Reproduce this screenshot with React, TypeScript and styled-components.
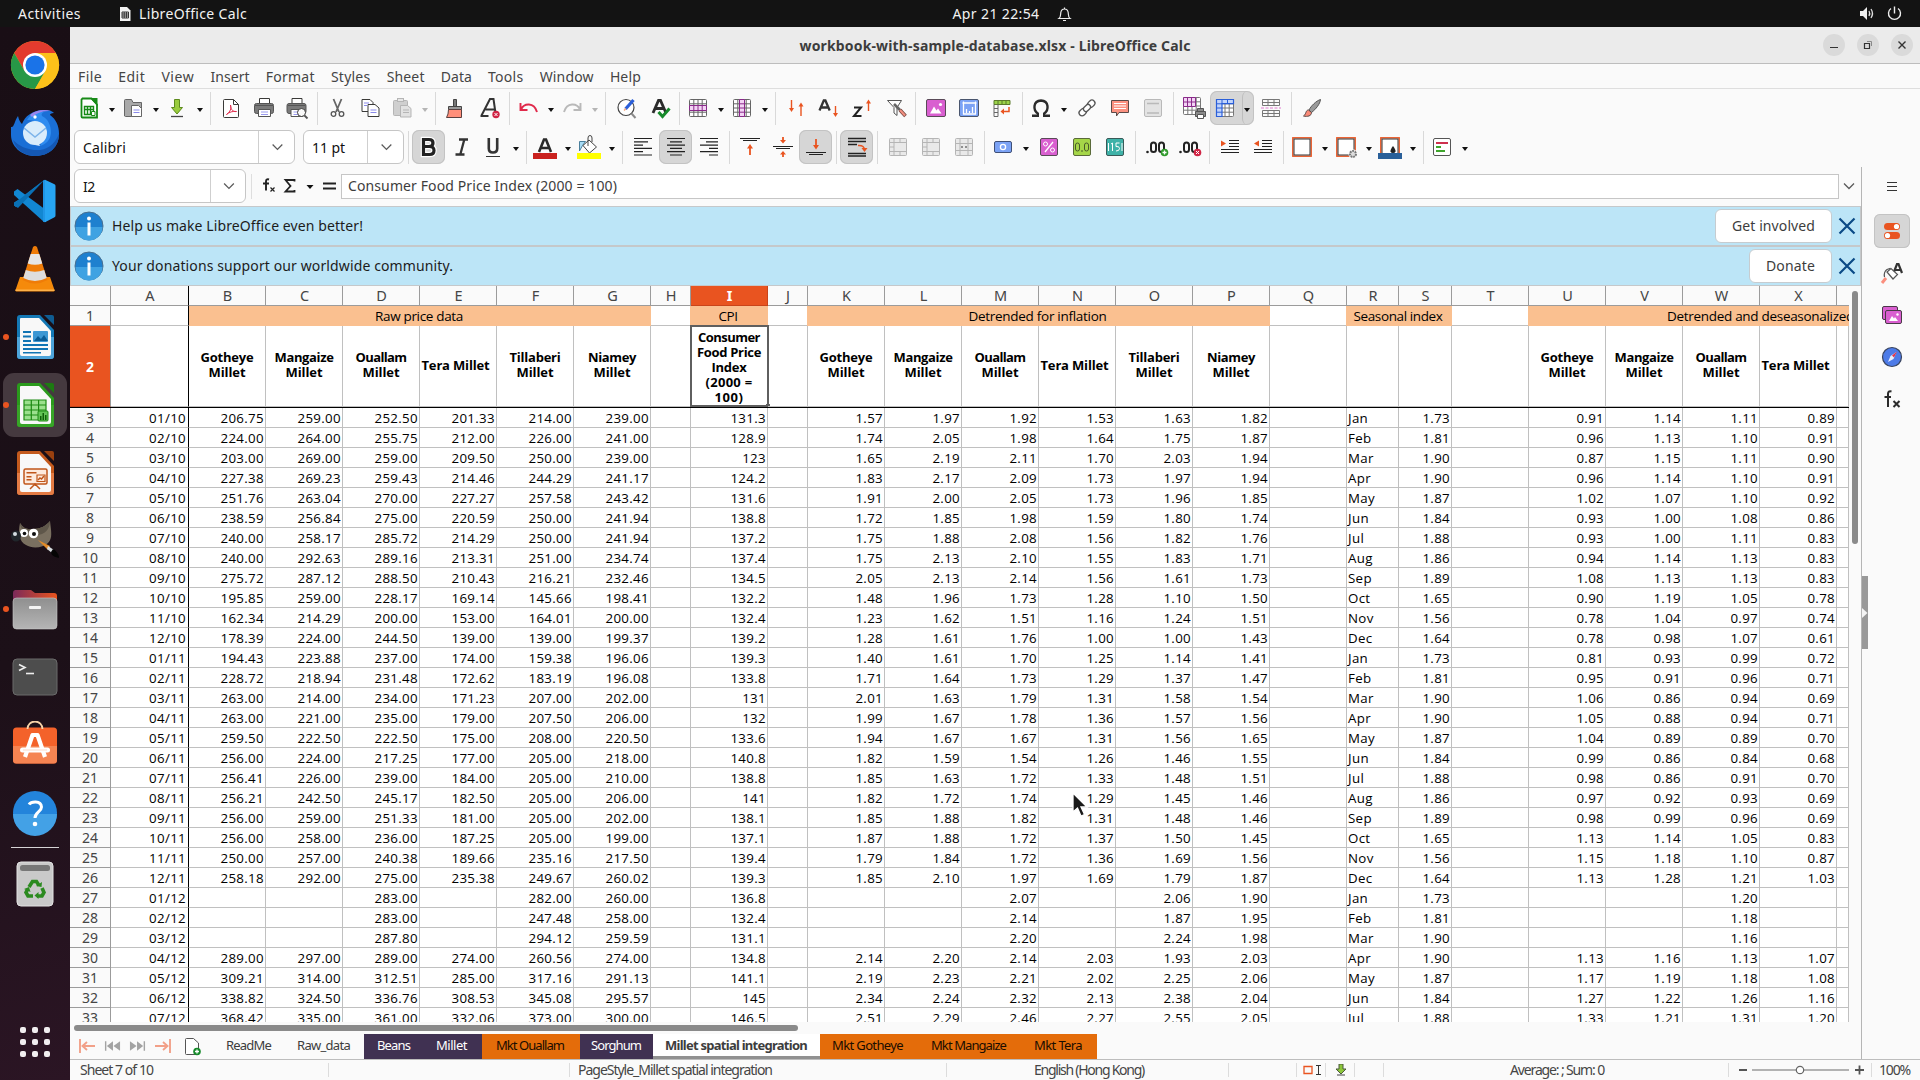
import React, { ReactNode, useLayoutEffect, useRef, useState } from 'react';
import styled, { createGlobalStyle, css } from 'styled-components';

const UI_FONT = '"Noto Sans", "Open Sans", sans-serif';
const CELL_FONT = '"Open Sans", "Noto Sans", sans-serif';

const GlobalStyle = createGlobalStyle`
  * { box-sizing: border-box; }
  body { margin: 0; background: #fafafa; overflow: hidden; }
  svg { display: block; flex: none; }
`;

/* ---------- text that keeps a fixed advance width ---------- */

const LabelBox = styled.span<{ $w: number; $color?: string; $bold?: boolean; $size?: number }>`
  display: block;
  flex: none;
  width: ${p => p.$w}px;
  white-space: nowrap;
  ${p => p.$color && css`color: ${p.$color};`}
  ${p => p.$bold && css`font-weight: 700;`}
  ${p => p.$size && css`font-size: ${p.$size}px;`}
`;

function Label(props: { w: number; children: string; color?: string; bold?: boolean; size?: number }) {
  const ref = useRef<HTMLSpanElement>(null);
  const [spacing, setSpacing] = useState(0);
  useLayoutEffect(() => {
    if (ref.current) {
      const natural = ref.current.getBoundingClientRect().width;
      setSpacing((props.w - natural) / props.children.length);
    }
  }, []);
  return (
    <LabelBox $w={props.w} $color={props.color} $bold={props.bold} $size={props.size}>
      <span ref={ref} style={{ letterSpacing: spacing }}>{props.children}</span>
    </LabelBox>
  );
}

/* ---------- shell ---------- */

const Screen = styled.div`
  width: 1920px;
  height: 1080px;
  display: flex;
  flex-direction: column;
  font-family: ${UI_FONT};
  font-size: 14px;
  color: #3d3d3d;
  overflow: hidden;
`;

const TopBar = styled.header`
  height: 27px;
  flex: none;
  background: #131313;
  color: #f2f2f2;
  display: grid;
  grid-template-columns: 1fr auto 1fr;
  align-items: center;
  line-height: 26px;
`;
const TopLeft = styled.div`
  display: flex;
  align-items: center;
  padding-left: 18px;
`;
const AppName = styled.div`
  display: flex;
  align-items: center;
  gap: 8px;
  margin-left: 38px;
`;
const Clock = styled.div`
  display: flex;
  align-items: center;
  gap: 17px;
  padding-left: 104px;
`;
const TopRight = styled.div`
  display: flex;
  justify-content: flex-end;
  align-items: center;
  gap: 12px;
  padding-right: 18px;
`;
const Body = styled.div`
  flex: 1;
  display: flex;
  min-height: 0;
`;

/* ---------- dock ---------- */

const Dock = styled.nav`
  width: 70px;
  flex: none;
  padding-top: 4px;
  display: flex;
  flex-direction: column;
  align-items: center;
  background: linear-gradient(165deg, #190e15 0%, #1c1018 60%, #2b1524 100%);
`;
const DockSlot = styled.div<{ $active?: boolean }>`
  width: 70px;
  height: 68px;
  display: flex;
  align-items: center;
  position: relative;
  justify-content: center;
  &::before {
    content: '';
    position: absolute;
    inset: 2px 3px;
    border-radius: 11px;
    background: ${p => (p.$active ? '#45393f' : 'transparent')};
  }
  svg { position: relative; }
`;
const RunDot = styled.i`
  position: absolute;
  left: 3px;
  top: 31px;
  width: 6px;
  height: 6px;
  border-radius: 3px;
  background: #e95420;
`;
const DockRule = styled.div`
  width: 48px;
  height: 1px;
  background: #d6d3d5;
  margin-bottom: 2px;
`;
const DockSpacer = styled.div`flex: 1;`;
const AppGrid = styled.div`
  display: grid;
  grid-template-columns: repeat(3, 6px);
  gap: 6px;
  margin-bottom: 23px;
  i { width: 6px; height: 6px; border-radius: 2px; background: #f0eeef; }
`;

const DocShape = ({ c, d, l, children }: { c: string; d: string; l: string; children: ReactNode }) => (
  <svg width="48" height="48" viewBox="0 0 48 48">
    <path d="M9 2h20l14 15v26a3 3 0 0 1-3 3H9a3 3 0 0 1-3-3V5a3 3 0 0 1 3-3z" fill={c} />
    <path d="M6 24h37v19a3 3 0 0 1-3 3H9a3 3 0 0 1-3-3z" fill={l} />
    <path d="M10 5h18l12 13v23a2 2 0 0 1-2 2H11a2 2 0 0 1-2-2V6a1 1 0 0 1 1-1z" fill="#f8f8f8" />
    <path d="M33 2h8a2 2 0 0 1 2 2v8z" fill={d} />
    {children}
  </svg>
);

const dockIcons: Record<string, ReactNode> = {
  chrome: (
    <svg width="50" height="50" viewBox="-25 -25 50 50">
      <circle r="24" fill="#fbbc15" />
      <path d="M-20.8-12A24 24 0 0 1 20.8-12L0-12-10.4 6z" fill="#e33b2e" />
      <path d="M-20.8-12A24 24 0 0 0 0 24L10.4 6-10.4 6z" fill="#279847" />
      <path d="M20.8-12H0L10.4 6 0 24A24 24 0 0 0 20.8-12z" fill="#fcc11a" />
      <circle r="12" fill="#fff" />
      <circle r="9.6" fill="#1a73e8" />
    </svg>
  ),
  thunderbird: (
    <svg width="50" height="48" viewBox="0 0 50 48">
      <path d="M1 18c3 1 3-5 7-11 1 4 2 6 4 8C15 7 22 2 32 1c5 0 9 0 12 3-3 0-4 1-4 2 6 4 9 11 9 19 0 13-10 22-24 22S1 37 1 26z" fill="#1a6fd6" />
      <path d="M3 31c3 10 12 16 22 16 14 0 24-9 24-22-5 12-14 17-25 16-8-1-15-4-21-10z" fill="#1458b4" />
      <path d="M17 11c4-7 11-9 17-8-2 1-3 2-2 4 6 3 9 9 9 17-1 8-5 11-11 13l5-10c3-8-5-16-18-16z" fill="#2f8cf0" />
      <path d="M20 6c5-5 14-6 21-4-8 0-13 1-19 6z" fill="#9b86ee" />
      <circle cx="25" cy="24" r="12" fill="#d9ecfb" />
      <path d="M14 19l11 9 11-9" fill="none" stroke="#7db4ea" strokeWidth="1.6" />
      <circle cx="25" cy="8" r="1.7" fill="#fff" />
      <path d="M25 36l5 1-2-4z" fill="#d9ecfb" />
    </svg>
  ),
  vscode: (
    <svg width="44" height="44" viewBox="0 0 44 44">
      <path d="M31 1L10 22.500 3 28 1 26.500v-3L5 21 31 1z" fill="#0d7dc4" />
      <path d="M1 15.500v-3L4.500 10 33 31v12L31 43 1 16z" fill="#1287d2" />
      <path d="M31 1.500L5 29l-4-2.500v-2L31 1.500z" fill="#0a70b5" />
      <path d="M32 .8l9.500 4.500a2 2 0 0 1 1 2v29a2 2 0 0 1-1 2L32 43.200l-2-1 2-3z" fill="#27a5f3" />
      <path d="M30 1.500l2-.7v42.400l-2-1z" fill="#1f95e5" />
    </svg>
  ),
  vlc: (
    <svg width="44" height="48" viewBox="0 0 44 48">
      <path d="M7 32h30l4.500 13a1 1 0 0 1-1 1.500H3.500a1 1 0 0 1-1-1.500z" fill="#f58a0b" />
      <path d="M2.500 44.500h39v1.500H2.500z" fill="#fdb14a" />
      <path d="M20 2q2-2 4 0l10.500 33q-12.500 7-25 0z" fill="#ef7c08" />
      <path d="M17.700 9h8.600l3 9.500q-7.300 2.500-14.600 0z" fill="#e6e6e6" />
      <path d="M12.800 25q9.200 3.500 18.400 0l2.500 8q-11.700 6-23.400 0z" fill="#dedede" />
    </svg>
  ),
  writer: (
    <DocShape c="#1478b5" d="#0f5c92" l="#4da4da">
      <g fill="#1174b4">
        <path d="M12 18h8v2h-8zM12 22.500h8v2h-8zM12 27h8v2h-8zM12 31h25v2H12zM12 35h25v2H12zM12 39h18v1.500H12z" />
        <rect x="22" y="18" width="15" height="11" rx="1" fill="#3d97d3" />
        <path d="M23 28l4-5 3 3 3-4 4 6z" fill="#0b5c96" />
      </g>
    </DocShape>
  ),
  calc: (
    <DocShape c="#2a9a1c" d="#1d7a12" l="#37a527">
      <path d="M13 19h22v20H13z" fill="#9be08d" />
      <path d="M13 19h22v20H13zM13 24h22M13 29h22M13 34h22M20.300 19v20M27.600 19v20" fill="none" stroke="#1d8a12" strokeWidth="1.200" />
      <rect x="27" y="30" width="10" height="10" rx="1" fill="#62c455" stroke="#1d8a12" />
      <path d="M29 39v-4h1.500v4zM31.500 39v-7H33v7zM34 39v-5h1.500v5z" fill="#0f5f08" />
    </DocShape>
  ),
  impress: (
    <DocShape c="#c45a1d" d="#99400f" l="#e37b44">
      <rect x="13" y="20" width="23" height="15" rx="1.500" fill="#fdeadd" stroke="#c0561a" strokeWidth="1.500" />
      <path d="M15.500 23h10v1.500h-10zM15.500 27h5v1.500h-5zM15.500 30h5v1.500h-5z" fill="#c0561a" />
      <path d="M26 26h8v6.500h-8z" fill="none" stroke="#c0561a" strokeWidth="1.200" />
      <path d="M27 31l2-2 1.500 1 2.500-3M19 40l5-5 5 5M24.500 35v2" fill="none" stroke="#c0561a" strokeWidth="1.500" />
    </DocShape>
  ),
  gimp: (
    <svg width="50" height="42" viewBox="0 0 50 42">
      <path d="M10 3c3 5 7 7 13 6 7 0 13-3 17-8 1 10 3 17-2 22-5 5-16 6-22 2C9 22 8 12 10 3z" fill="#7a7060" />
      <path d="M10 3c3 5 7 7 13 6 7 0 13-3 17-8 0 8-5 14-14 14S10 10 10 3z" fill="#5f574a" />
      <circle cx="14" cy="13" r="4" fill="#fff" />
      <circle cx="23.500" cy="13.500" r="4.800" fill="#fff" />
      <circle cx="14.500" cy="13.500" r="1.800" fill="#111" />
      <circle cx="24" cy="14" r="2" fill="#111" />
      <ellipse cx="6" cy="16" rx="5" ry="5.500" fill="#20262b" />
      <circle cx="5" cy="14" r="2" fill="#d5dde2" />
      <path d="M28 20l12 6-2 4z" fill="#e38b28" />
      <path d="M38 26l6 4-2 3-5-4z" fill="#d8dde0" />
      <path d="M43 29c4 2 6 6 6 9-5-1-8-3-8-6z" fill="#050505" />
    </svg>
  ),
  files: (
    <svg width="48" height="42" viewBox="0 -1 48 42">
      <defs>
        <linearGradient id="fold" x1="0" x2="1"><stop offset="0" stopColor="#7b2a5a" /><stop offset="1" stopColor="#e9541e" /></linearGradient>
        <linearGradient id="front" x1="0" x2="0" y1="0" y2="1"><stop offset="0" stopColor="#8f8f8f" /><stop offset="1" stopColor="#b5b5b5" /></linearGradient>
      </defs>
      <path d="M4 1h16l4 3h19a3 3 0 0 1 3 3v14H2V4a3 3 0 0 1 2-3z" fill="url(#fold)" />
      <rect x="2" y="9" width="44" height="31" rx="3.500" fill="url(#front)" stroke="#c9c9c9" strokeWidth=".6" />
      <rect x="18" y="17" width="12" height="3" rx="1" fill="#f4f4f4" />
    </svg>
  ),
  terminal: (
    <svg width="46" height="38" viewBox="0 0 46 38">
      <rect x="1" y="1" width="44" height="36" rx="4" fill="#4d4d4d" stroke="#6b6b6b" />
      <path d="M7 6.500l6 3-6 3" fill="none" stroke="#eee" strokeWidth="1.600" />
      <path d="M14 15.500h8" stroke="#eee" strokeWidth="1.600" />
    </svg>
  ),
  software: (
    <svg width="46" height="48" viewBox="0 1 46 48">
      <rect x="1" y="7.500" width="44" height="36" rx="3.500" fill="#f4622a" />
      <path d="M1 26h44v14a3.500 3.500 0 0 1-3.500 3.500h-37A3.500 3.500 0 0 1 1 40z" fill="#f58452" />
      <path d="M15.500 9a7.500 7.500 0 0 1 15 0" fill="none" stroke="#f7d3a8" strokeWidth="1.800" />
      <path d="M13 37l7.500-22h5L33 37" fill="none" stroke="#fff" strokeWidth="4.200" strokeLinejoin="round" />
      <path d="M10.500 30h25" stroke="#fff" strokeWidth="5" strokeLinecap="round" />
      <path d="M11 30h24" stroke="#fbd9c8" strokeWidth="1" />
    </svg>
  ),
  help: (
    <svg width="46" height="46" viewBox="0 0 46 46">
      <circle cx="23" cy="23" r="22" fill="#2384db" />
      <path d="M1 24h44a22 22 0 0 1-44 0z" fill="#43a1e6" />
      <path d="M17 14.500c2-3 12-4.500 12.500 2.500 0 5-6.500 5-6.500 11" fill="none" stroke="#fff" strokeWidth="3" />
      <circle cx="23" cy="34" r="2.300" fill="#fff" />
    </svg>
  ),
  trash: (
    <svg width="38" height="46" viewBox="0 0 38 46">
      <rect x="1" y="1" width="36" height="44" rx="4" fill="#c9c9c9" stroke="#e3e3e3" />
      <rect x="4" y="4" width="30" height="6" rx="2.500" fill="#777" />
      <g fill="none" stroke="#2b8a1f" strokeWidth="3.600">
        <path d="M13 26l3.500-5.500h4L23 24.500" />
        <path d="M26 27l2 4.500-2 3.500h-5" />
        <path d="M17 35h-5l-2-3.500 1.500-3" />
      </g>
      <path d="M20 25l5.500 1 .5-5zM22.500 31v7l-4-3.500zM8 28l5-2 1.500 5z" fill="#2b8a1f" />
    </svg>
  ),
};

/* ---------- window chrome ---------- */

const Win = styled.main`
  flex: 1;
  min-width: 0;
  display: flex;
  flex-direction: column;
  background: #fafafa;
`;
const TitleBar = styled.div`
  height: 37px;
  flex: none;
  display: grid;
  grid-template-columns: 1fr auto 1fr;
  align-items: center;
  background: #ebebeb;
  border-bottom: 1px solid #bdbdbd;
  padding: 0 7px 0 7px;
`;
const WinButtons = styled.div`
  display: flex;
  gap: 12px;
  justify-content: flex-end;
`;
const WinButton = styled.span`
  width: 22px;
  height: 22px;
  border-radius: 11px;
  background: #dadada;
  display: grid;
  place-items: center;
`;
const MenuBar = styled.div`
  height: 25px;
  flex: none;
  border-bottom: 1px solid #dedede;
  padding: 0 0 0 8px;
  display: flex;
  align-items: center;
  gap: 16.200px;
  color: #454545;
`;
const ToolRow = styled.div<{ $h: number; $pad: string }>`
  height: ${p => p.$h}px;
  flex: none;
  display: flex;
  align-items: flex-start;
  padding: ${p => p.$pad};
`;
const Sep = styled.span`
  width: 8px;
  height: 34px;
  flex: none;
  display: flex;
  justify-content: center;
  padding-top: 1px;
  &::before {
    content: '';
    width: 1px;
    height: 33px;
    background: #d9d9d9;
  }
`;
const Button = styled.span<{ $on?: boolean; $drop?: boolean }>`
  height: 34px;
  flex: none;
  display: flex;
  align-items: center;
  border-radius: 7px;
  width: ${p => (p.$drop ? 44 : 33)}px;
  padding-left: ${p => (p.$drop ? 3 : 5)}px;
  ${p => p.$on && css`background: #d6d6d6; box-shadow: inset 0 0 0 1px #c3c3c3;`}
`;
const Caret = styled.i<{ $dim?: boolean }>`
  border: 3.500px solid transparent;
  border-top: 4px solid ${p => (p.$dim ? '#b5b5b5' : '#111')};
  border-bottom: 0;
  margin: 3px 0 0 8px;
`;
const SplitCaret = styled.span`
  align-self: stretch;
  width: 12px;
  margin-left: 5px;
  border-left: 1px solid #bdbdbd;
  border-radius: 7px;
  display: flex;
  align-items: center;
  i { margin-left: 1px; }
`;
const Combo = styled.div<{ $w: number; $arrow: number; $mr: number }>`
  width: ${p => p.$w}px;
  height: 34px;
  flex: none;
  margin-right: ${p => p.$mr}px;
  border: 1px solid #c6c6c6;
  border-radius: 6px;
  background: #fff;
  color: #111;
  display: grid;
  grid-template-columns: 1fr ${p => p.$arrow}px;
  align-items: center;
  padding-left: 8px;
  svg { border-left: 1px solid #cfcfcf; }
`;

const Chevron = ({ w, h = 32, dx = 0 }: { w: number; h?: number; dx?: number }) => (
  <svg width={w} height={h} viewBox={`${-w / 2 - dx} ${-h / 2} ${w} ${h}`}>
    <path d="M-5-2.500L0 2.500 5-2.500" fill="none" stroke="#5a5a5a" strokeWidth="1.300" />
  </svg>
);

const I = ({ children, dx = 0 }: { children: ReactNode; dx?: number }) => (
  <svg width="24" height="24" viewBox={`${-dx} 0 24 24`} overflow="visible" fill="none" stroke="#3a3a38">{children}</svg>
);
const sheetGrid = (x: number, y: number, s: string) => (
  <g stroke={s}>
    <rect x={x} y={y} width="17" height="17" rx="1" fill="#fff" />
    <path d={`M${x} ${y + 4.300}h17M${x} ${y + 8.500}h17M${x} ${y + 12.700}h17M${x + 4.300} ${y}v17M${x + 8.500} ${y}v17M${x + 12.700} ${y}v17`} />
  </g>
);
const lines = (widths: number[], align: number) => (
  <path
    stroke="#222"
    strokeWidth="1.200"
    d={widths.map((w, i) => `M${3 + (18 - w) * align} ${3.500 + i * 3.300}h${w}`).join('')}
  />
);
const printer = (
  <>
    <path d="M7.500 8V2.500h10V8" fill="#fff" />
    <rect x="2.500" y="7.500" width="19" height="10" rx="2" fill="#7a7a7a" stroke="#555" />
    <path d="M3 9.500h18" stroke="#555" />
    <path d="M6.500 13.500h12v7h-12z" fill="#fff" stroke="#555" />
    <path d="M9 16h7M9 18.500h7" stroke="#9a9aef" />
  </>
);
const zeroes = (
  <>
    <circle cx="2.500" cy="17" r="1.300" fill="#222" stroke="none" />
    <rect x="6" y="7.500" width="5" height="9.500" rx="2.500" stroke="#222" strokeWidth="2" />
    <rect x="14" y="7.500" width="5" height="9.500" rx="2.500" stroke="#222" strokeWidth="2" />
  </>
);
const borderBox = (
  <>
    <rect x="2.800" y="2.800" width="18.400" height="18.400" stroke="#e95420" strokeWidth="1.400" />
    <rect x="4" y="4" width="16" height="16" fill="#fff" stroke="#333" />
  </>
);

const icons: Record<string, ReactNode> = {
  newSheet: (
    <I>
      <path d="M5.500 2.500h9l5.500 6v13h-14.500a1 1 0 0 1-1-1v-17z" fill="#fff" stroke="#178a17" strokeWidth="1.800" />
      <path d="M13 2h7.500v8z" fill="#178a17" stroke="none" />
      <path d="M7.500 10.500h9v8h-9zM7.500 13.500h9M10.500 10.500v8M13.500 10.500v8" stroke="#178a17" strokeWidth="1.400" />
      <path d="M14.500 15.500h3.500v4h-3.500z" fill="#fff" stroke="#178a17" />
    </I>
  ),
  open: (
    <I>
      <path d="M3.500 20V4.500q0-1 1-1h6l1.500 3h8.500v13q0 1-1 1H4.500z" fill="#a9a9a9" stroke="#666" />
      <path d="M10.500 9.500h7l3 3v8h-10z" fill="#fff" stroke="#666" />
      <path d="M12.500 14h6M12.500 16.500h6" stroke="#8a8aea" />
    </I>
  ),
  save: (
    <I>
      <path d="M9.500 3.500h5v8h3L12 18l-5.500-6.500h3z" fill="#99cc3d" stroke="#5d8a1d" />
      <path d="M6 20.500h12" stroke="#444" strokeWidth="1.300" />
    </I>
  ),
  pdf: (
    <I>
      <path d="M5.500 3.500h9l5 5v12q0 1-1 1H5.500q-1 0-1-1v-16q0-1 1-1z" fill="#fff" />
      <path d="M14.500 3.500v5h5" />
      <path d="M7.500 18.500c4-3 5-6 4-9.500 0 5 3 7 6 6.500-4-.5-7 .5-10 3z" stroke="#e02a4b" />
    </I>
  ),
  print: <I>{printer}</I>,
  preview: (
    <I dx={-0.5}>
      {printer}
      <circle cx="17" cy="16.500" r="4" fill="#fafafa" />
      <path d="M20 19.500l3 3" stroke="#555" strokeWidth="1.800" />
    </I>
  ),
  cut: (
    <I dx={-0.5}>
      <path d="M8 3l5.500 13M16 3l-5.500 13" stroke="#666" strokeWidth="1.800" />
      <circle cx="8" cy="18" r="2.300" strokeWidth="1.300" stroke="#555" />
      <circle cx="16" cy="18" r="2.300" strokeWidth="1.300" stroke="#555" />
    </I>
  ),
  copy: (
    <I dx={-0.5}>
      <path d="M3.500 3.500h8l3 3v9h-11z" fill="#fff" />
      <path d="M9.500 8.500h7l4 3.500v8.500h-11z" fill="#fff" />
      <path d="M5.500 7h5M5.500 9.500h3M12 14h6M12 16.500h6" stroke="#8a8aea" />
    </I>
  ),
  paste: (
    <I>
      <rect x="3.500" y="4.500" width="14" height="15" rx="1" fill="#cfcfcf" stroke="#b5b5b5" />
      <rect x="7.500" y="2.500" width="6" height="3" fill="#e6e6e6" stroke="#b5b5b5" />
      <path d="M10.500 9.500h7l3.500 3v8.500h-10.500z" fill="#e2e2e2" stroke="#b5b5b5" />
      <path d="M13 14h6M13 16.500h6" stroke="#b5b5b5" />
    </I>
  ),
  clone: (
    <I dx={-2}>
      <path d="M11.500 3.500h3v7h-3z" fill="#777" stroke="#444" />
      <path d="M6.500 10.500h13v3h-13z" fill="#999" stroke="#444" />
      <path d="M6.500 13.500h13v8h-15q2-3 2-8z" fill="#ff8f7a" stroke="#5a4040" />
    </I>
  ),
  clear: (
    <I dx={0.5}>
      <path d="M4 19.500L12.500 3H16l2 14M8 13.500h9M3 20h8" stroke="#333" strokeWidth="2" />
      <circle cx="18.500" cy="18.500" r="3.700" fill="#d02545" stroke="none" />
      <path d="M17 17l3 3M20 17l-3 3" stroke="#fff" />
    </I>
  ),
  undo: (
    <I dx={1}>
      <path d="M3.500 7v7h7M4 13.500C7 7 17 6 20 16" stroke="#e02a4b" strokeWidth="1.900" />
    </I>
  ),
  redo: (
    <I>
      <path d="M20.500 7v7h-7M20 13.500C17 7 7 6 4 16" stroke="#b9b9b9" strokeWidth="1.900" />
    </I>
  ),
  find: (
    <I dx={0.5}>
      <circle cx="11.500" cy="11.500" r="8" fill="#fff" strokeWidth="1.200" stroke="#444" />
      <path d="M17 17.500l4 4.500" stroke="#8a8a8a" strokeWidth="2" />
      <path d="M11 13l8-9" stroke="#2b5fd9" strokeWidth="3.200" />
      <path d="M9.500 14.500l2-2" stroke="#f2a77f" strokeWidth="1.500" />
    </I>
  ),
  spell: (
    <I dx={2}>
      <path d="M4 17L9.500 4.500h2L17 17M6 12.500h9" stroke="#2b2b2b" strokeWidth="2.800" />
      <path d="M9.500 16l4 4.500 7-8" stroke="#178a2b" strokeWidth="3" />
    </I>
  ),
  row: (
    <I>
      {sheetGrid(3.500, 3.500, '#666')}
      <path d="M3.500 9.500h17v5h-17z" fill="#f3d3f5" stroke="#8a2a8a" />
      <path d="M7.800 9.500v5M12 9.500v5M16.200 9.500v5" stroke="#8a2a8a" />
    </I>
  ),
  column: (
    <I>
      {sheetGrid(3.500, 3.500, '#666')}
      <path d="M9.500 3.500h5v17h-5z" fill="#f3d3f5" stroke="#8a2a8a" />
      <path d="M9.500 7.800h5M9.500 12h5M9.500 16.200h5" stroke="#8a2a8a" />
    </I>
  ),
  sort: (
    <I>
      <path d="M7.500 4v10M17 20V9" stroke="#e95420" strokeWidth="1.400" />
      <path d="M5 12h5l-2.500 4zM14.500 10.500h5L17 6.500z" fill="#e95420" stroke="none" />
    </I>
  ),
  asc: (
    <I>
      <path d="M2.500 14.500L6.800 4.500h1.600L12.700 14.500M4 11.500h7" stroke="#333" strokeWidth="2.300" />
      <path d="M18.500 10v9" stroke="#e95420" strokeWidth="1.400" />
      <path d="M16 17h5l-2.500 4z" fill="#e95420" stroke="none" />
    </I>
  ),
  desc: (
    <I dx={0.5}>
      <path d="M3.500 11.500h7l-7 8.500h7.500" stroke="#222" strokeWidth="2" />
      <path d="M18 15V6" stroke="#e95420" strokeWidth="1.400" />
      <path d="M15.500 7.500h5L18 3.500z" fill="#e95420" stroke="none" />
    </I>
  ),
  filter: (
    <I dx={2}>
      <path d="M2.500 4.500h14l-4.500 7v8l-3-2.500v-5.500z" fill="#fff" stroke="#555" />
      <path d="M9 8l7 7" stroke="#666" strokeWidth="2.600" />
      <path d="M15 14l5.500 6" stroke="#7a4a44" strokeWidth="3.600" />
      <path d="M15 14l5 5.500" stroke="#f28f80" strokeWidth="2" />
    </I>
  ),
  image: (
    <I>
      <rect x="2.500" y="3.500" width="19" height="17" rx="1.500" fill="#d95fd0" stroke="#5a4a58" />
      <path d="M6 17.500l4-7 2.500 4 1.500-2 3.500 5z" fill="#fff" stroke="none" />
      <circle cx="16.500" cy="8.500" r="1.600" fill="#fff" stroke="none" />
    </I>
  ),
  chart: (
    <I>
      <rect x="2.500" y="3.500" width="19" height="17" rx="1.500" fill="#7ba2f5" stroke="#4a566e" />
      <path d="M5.500 7h14M6 18h13M6.500 5.500v13M18.500 5.500v13M9.500 17v-4M12.500 17v-2M15.500 17v-6" stroke="#fff" strokeWidth="1.300" />
    </I>
  ),
  pivot: (
    <I dx={-0.5}>
      <path d="M4.500 4.500h16v4h-16z" fill="#9bd34a" stroke="#5b7a2b" />
      <path d="M8.500 4.500v4M12.500 4.500v4M16.500 4.500v4" stroke="#5b7a2b" />
      <path d="M4.500 8.500v12h4v-12M4.500 12.500h4M4.500 16.500h4" stroke="#666" />
      <path d="M19.500 11v4.500h-6" stroke="#e95420" strokeWidth="1.500" />
      <path d="M14.500 12.500v6l-3.500-3z" fill="#e95420" stroke="none" />
    </I>
  ),
  omega: (
    <I>
      <path d="M3 19.800h5.800v-2.300C4 14 3.800 5 12 4.500c8.200.5 8 9.500 3.200 13v2.300H21" stroke="#2b2b2b" strokeWidth="2.400" />
    </I>
  ),
  link: (
    <I>
      <g transform="rotate(-45 12 12)" stroke="#555" strokeWidth="1.300">
        <rect x="2" y="9" width="8" height="6" rx="3" fill="#fff" />
        <rect x="14" y="9" width="8" height="6" rx="3" fill="#fff" />
        <rect x="8" y="9.500" width="8" height="5" rx="2.500" fill="#fff" />
      </g>
    </I>
  ),
  comment: (
    <I>
      <path d="M3.500 4.500h17v12h-9.500l-2.500 3.500v-3.500h-5z" fill="#fa9180" stroke="#5a4a48" />
      <path d="M6 7.500h12M6 10h12M6 12.500h12" stroke="#fff" />
    </I>
  ),
  header: (
    <I>
      <rect x="3.500" y="3.500" width="17" height="17" rx="1.500" fill="#e3e3e3" stroke="#b9b9b9" />
      <path d="M6 7.500h12M6 17h12" stroke="#b9b9b9" strokeWidth="1.600" />
    </I>
  ),
  printArea: (
    <I>
      {sheetGrid(1.500, 1.500, '#777')}
      <path d="M1.500 1.500h12v9h-12zM1.500 6h12M5.500 1.500v9M9.500 1.500v9" fill="#f3d3f5" stroke="#8a2a8a" />
      <path d="M15.500 15.500v-3h6v3M13.500 15.500h10v5h-10z" fill="#8a8a8a" stroke="#555" />
      <path d="M15.500 18.500h6v4h-6z" fill="#fff" stroke="#555" />
    </I>
  ),
  freeze: (
    <I>
      {sheetGrid(3.500, 3.500, '#777')}
      <path d="M3.500 3.500h17v4.200H9v12.800H3.500z" fill="#c2d5fb" stroke="#2b5fd9" strokeWidth="1.200" />
      <path d="M3.500 7.800H9M3.500 12H9M3.500 16.200H9M9 3.500v4.300M14.500 3.500v4.300" stroke="#2b5fd9" />
    </I>
  ),
  split: (
    <I>
      <path d="M3.500 3.500h17v6h-17zM3.500 6.500h17M9 3.500v6M15 3.500v6M3.500 14.500h17v6h-17zM3.500 17.500h17M9 14.500v6M15 14.500v6" stroke="#777" />
      <path d="M2 12h20" stroke="#e07ad0" strokeDasharray="3 1.500" />
    </I>
  ),
  draw: (
    <I>
      <path d="M20.500 3.500C16 5 11 10 9 14l2.500 2.500C16 13 20 8 20.500 3.500z" fill="#9a9a9a" stroke="#555" />
      <path d="M8.500 14c-3 0-2 4-5 6 4 1 8 0 8-3.500z" fill="#fa8a78" stroke="#5a4a48" />
    </I>
  ),
  bold: (
    <I dx={-0.5}>
      <path d="M7 4.500h5.500q4 0 4 3.500t-4 3.500H7zM7 11.500h6q4.500 0 4.500 4t-4.500 4H7z" stroke="#fff" strokeWidth="5.500" />
      <path d="M7 4.500h5.500q4 0 4 3.500t-4 3.500H7zM7 11.500h6q4.500 0 4.500 4t-4.500 4H7z" stroke="#222" strokeWidth="3.200" />
    </I>
  ),
  italic: <I dx={0.5}><path d="M8.500 4.500h9M5 19.500h9M13.800 4.500l-4 15" stroke="#333" strokeWidth="2.300" /></I>,
  underline: (
    <I>
      <path d="M7.800 3v10.500q0 4 4.200 4t4.200-4V3" stroke="#333" strokeWidth="2.600" />
      <path d="M5 21.500h14" stroke="#333" />
    </I>
  ),
  fontColor: (
    <I>
      <path d="M6 17L11 4.500h2L18 17M8 13h8" stroke="#2b2b2b" strokeWidth="2.600" />
      <path d="M0 18h24v6H0z" fill="#c9211e" stroke="none" />
    </I>
  ),
  fill: (
    <I>
      <path d="M2.500 16V6.500h6l-3 4z" fill="#a8dcf5" stroke="#4a7f9c" />
      <path d="M6 10.500l6-5.500 7.500 7-7 6z" fill="#fff" stroke="#444" />
      <path d="M11 11V3q0-2.500 2-2.500T15 3v4" stroke="#444" />
      <path d="M0 18h24v6H0z" fill="#ffff00" stroke="none" />
    </I>
  ),
  left: <I>{lines([18, 14, 9, 18, 9, 18], 0)}</I>,
  center: <I>{lines([18, 12, 18, 12, 18, 12], 0.5)}</I>,
  right: <I>{lines([18, 12, 18, 9, 18, 9], 1)}</I>,
  top: (
    <I>
      <path d="M2 3.500h20M5 5.500h14" stroke="#222" />
      <path d="M12 20v-8" stroke="#e95420" strokeWidth="1.800" />
      <path d="M9 13.500h6L12 9z" fill="#e95420" stroke="none" />
    </I>
  ),
  middle: (
    <I>
      <path d="M2 11.500h20M5 13.500h14" stroke="#222" />
      <path d="M12 2v4M12 22v-4" stroke="#e95420" strokeWidth="1.800" />
      <path d="M9 5h6l-3 3.500zM9 19.500h6L12 16z" fill="#e95420" stroke="none" />
    </I>
  ),
  bottom: (
    <I>
      <path d="M2 17.500h20M5 19.500h14" stroke="#222" />
      <path d="M12 4v7" stroke="#e95420" strokeWidth="1.800" />
      <path d="M9 10h6l-3 4.500z" fill="#e95420" stroke="none" />
    </I>
  ),
  wrap: (
    <I>
      <path d="M3 3.500h18M3 6.500h18M3 9.500h9M3 18.500h18M3 21h18" stroke="#222" strokeWidth="1.300" />
      <path d="M13 10.500q6-.5 6.500 4" stroke="#e95420" strokeWidth="1.400" />
      <path d="M16.500 13h6l-3 4z" fill="#e95420" stroke="none" />
    </I>
  ),
  merge: (
    <I>
      <rect x="3.500" y="3.500" width="17" height="17" rx="1" fill="#e9e9e9" stroke="#b5b5b5" />
      <path d="M3.500 7.500h17M3.500 16.500h17M8 3.500v17M14 3.500v4M14 16.500v4M3.500 12H8" stroke="#b5b5b5" />
    </I>
  ),
  unmerge: (
    <I>
      <rect x="3.500" y="3.500" width="17" height="17" rx="1" fill="#e9e9e9" stroke="#b5b5b5" />
      <path d="M3.500 8.500h17M3.500 15.500h17M8 3.500v17M16 3.500v17" stroke="#b5b5b5" />
      <path d="M9 12h2M13 12h2" stroke="#8f8f8f" strokeWidth="2" />
    </I>
  ),
  currency: (
    <I>
      <rect x="3.500" y="6.500" width="17" height="11" rx="1.500" fill="#7ba2f5" stroke="#3f5078" />
      <circle cx="12" cy="12" r="2.600" stroke="#fff" strokeWidth="1.300" />
    </I>
  ),
  percent: (
    <I>
      <rect x="3.500" y="3.500" width="17" height="17" rx="1.500" fill="#d95fd0" stroke="#5a4a58" />
      <path d="M8 17l8-10" stroke="#fff" strokeWidth="1.300" />
      <circle cx="8.500" cy="9" r="2" stroke="#fff" /><circle cx="15.500" cy="15" r="2" stroke="#fff" />
    </I>
  ),
  number: (
    <I>
      <rect x="3.500" y="3.500" width="17" height="17" rx="1.500" fill="#a5d648" stroke="#5a6a3a" />
      <rect x="5.500" y="8" width="4" height="8" rx="2" stroke="#4a5a2a" /><rect x="14.500" y="8" width="4" height="8" rx="2" stroke="#4a5a2a" />
      <path d="M12 15v2" stroke="#4a5a2a" />
    </I>
  ),
  date: (
    <I>
      <rect x="3.500" y="3.500" width="17" height="17" rx="1.500" fill="#3fb2a8" stroke="#3a5a58" />
      <path d="M5.500 8v8M8 9l1.500-1v8M16.500 8H13v3.500q3.500-.5 3.500 2T13 16M19 8v8" stroke="#fff" />
    </I>
  ),
  addDecimal: (
    <I dx={1}>
      {zeroes}
      <circle cx="19.500" cy="17.500" r="3.800" fill="#2f9a2b" stroke="none" />
      <path d="M17.500 17.500h4M19.500 15.500v4" stroke="#fff" strokeWidth="1.300" />
    </I>
  ),
  delDecimal: (
    <I dx={1}>
      {zeroes}
      <circle cx="19.500" cy="17.500" r="3.800" fill="#d02545" stroke="none" />
      <path d="M18 16l3 3M21 16l-3 3" stroke="#fff" />
    </I>
  ),
  indent: (
    <I>
      <path d="M11 5.500h10M11 8.500h10M11 11.500h10M3 14.500h18M3 17.500h18" stroke="#222" />
      <path d="M3 5.500v6L8 8.500z" fill="#e95420" stroke="none" />
    </I>
  ),
  outdent: (
    <I>
      <path d="M11 5.500h10M11 8.500h10M11 11.500h10M3 14.500h18M3 17.500h18" stroke="#222" />
      <path d="M8 5.500v6L3 8.500z" fill="#e95420" stroke="none" />
    </I>
  ),
  border: <I>{borderBox}</I>,
  borderStyle: (
    <I>
      {borderBox}
      <circle cx="19" cy="19" r="4.500" fill="#fafafa" stroke="none" />
      <circle cx="19" cy="19" r="3" fill="#ddd" stroke="#777" strokeWidth="2" strokeDasharray="1.800 .8" />
    </I>
  ),
  borderColor: (
    <I>
      {borderBox}
      <path d="M15 11q3 4 2.500 5.500t-2.500 1.500-2.500-1.500T15 11z" fill="#222" stroke="none" />
      <path d="M0 18h24v6H0z" fill="#2a6099" stroke="none" />
    </I>
  ),
  conditional: (
    <I>
      <rect x="3.500" y="3.500" width="17" height="17" rx="1.500" fill="#fff" stroke="#555" />
      <path d="M6 8h12" stroke="#c91a3a" strokeWidth="1.800" />
      <path d="M6 12h5M6 16h9" stroke="#3fa52b" strokeWidth="1.800" />
    </I>
  ),
};

type Tool = { icon: string; drop?: boolean; on?: boolean; dim?: boolean } | '|';
const d = (icon: string, dim = false): Tool => ({ icon, drop: true, dim });
const b = (icon: string, on = false): Tool => ({ icon, on });

const standardBar: Tool[] = [
  d('newSheet'), d('open'), d('save'), '|', b('pdf'), b('print'), b('preview'), '|',
  b('cut'), b('copy'), d('paste', true), '|', b('clone'), b('clear'), '|', d('undo'), d('redo', true), '|',
  b('find'), b('spell'), '|', d('row'), d('column'), '|', b('sort'), b('asc'), b('desc'), b('filter'), '|',
  b('image'), b('chart'), b('pivot'), '|', d('omega'), b('link'), b('comment'), b('header'), '|',
  b('printArea'), { icon: 'freeze', drop: true, on: true }, b('split'), '|', b('draw'),
];
const formatBar: Tool[] = [
  b('bold', true), b('italic'), d('underline'), '|', d('fontColor'), d('fill'), '|',
  b('left'), b('center', true), b('right'), '|', b('top'), b('middle'), b('bottom', true), '|',
  b('wrap', true), '|', b('merge'), b('merge'), b('unmerge'), '|', d('currency'), b('percent'), b('number'), b('date'), '|',
  b('addDecimal'), b('delDecimal'), '|', b('indent'), b('outdent'), '|',
  d('border'), d('borderStyle'), d('borderColor'), '|', d('conditional'),
];

const Tools = ({ items }: { items: Tool[] }) => (
  <>
    {items.map((t, i) =>
      t === '|' ? (
        <Sep key={i} />
      ) : (
        <Button key={i} $on={t.on} $drop={t.drop}>
          {icons[t.icon]}
          {t.drop && (t.on ? <SplitCaret><Caret /></SplitCaret> : <Caret $dim={t.dim} />)}
        </Button>
      ),
    )}
  </>
);

/* ---------- content split: sheet area and sidebar ---------- */

const Content = styled.div`
  flex: 1;
  min-height: 0;
  display: flex;
`;
const Main = styled.section`
  width: 1791px;
  flex: none;
  display: flex;
  flex-direction: column;
`;
const FormulaBar = styled.div`
  height: 39px;
  flex: none;
  display: flex;
  align-items: center;
  padding: 0 2px 1px 4px;
`;
const FormulaTools = styled.div`
  width: 90px;
  height: 25px;
  flex: none;
  border-left: 1px solid #dedede;
  display: flex;
  align-items: center;
  padding-left: 10px;
`;
const FormulaInput = styled.div`
  flex: 1;
  height: 25px;
  border: 1px solid #c6c6c6;
  background: #fff;
  display: flex;
  align-items: center;
  padding: 0 0 1px 6px;
`;
const InfoBar = styled.div`
  height: 40px;
  flex: none;
  display: flex;
  align-items: center;
  background: #bce5f7;
  border: 1px solid #c5c8ca;
  padding: 0 4px 1px 3px;
  color: #1c1c1c;
`;
const InfoText = styled.div`
  flex: 1;
  margin-left: 8px;
`;
const InfoButton = styled.div<{ $w: number }>`
  width: ${p => p.$w}px;
  height: 34px;
  border: 1px solid #c6ccd0;
  border-radius: 6px;
  background: #fff;
  color: #3d3d3d;
  display: flex;
  align-items: center;
  justify-content: center;
  margin-right: 6px;
`;
const InfoIcon = () => (
  <svg width="30" height="30" viewBox="-15 -15 30 30">
    <circle r="14" fill="#1e80cf" stroke="#4a6f8f" />
    <path d="M-13.500 1h27a13.500 13.500 0 0 1-27 0z" fill="#3fa2e2" />
    <circle cy="-7.500" r="2" fill="#fff" />
    <path d="M-1.500-3.500h3v13h-3z" fill="#fff" />
  </svg>
);
const CloseX = () => (
  <svg width="18" height="18" viewBox="0 0 18 18">
    <path d="M1.500 1.500l15 15M16.500 1.500l-15 15" stroke="#0b4a86" strokeWidth="2.200" />
  </svg>
);

const SheetArea = styled.div`
  height: 736px;
  flex: none;
  display: flex;
`;
const Sheet = styled.div`
  width: 1779px;
  height: 736px;
  flex: none;
  overflow: hidden;
  background: #fff;
  font-family: ${CELL_FONT};
  color: #000;
`;
const COLS = '41px 78px repeat(6, 77px) 40px 77px 40px repeat(6, 77px) 77px 52px 53px 77px repeat(4, 77px) 12px';
const SheetRow = styled.div<{ $h: number }>`
  display: grid;
  grid-template-columns: ${COLS};
  height: ${p => p.$h}px;
`;
const ColHead = styled.div<{ $on?: boolean }>`
  background: ${p => (p.$on ? '#e95420' : '#fafafa')};
  color: ${p => (p.$on ? '#fff' : '#454545')};
  font: ${p => (p.$on ? 700 : 400)} 14.500px ${UI_FONT};
  line-height: 19px;
  text-align: center;
  padding-left: 1px;
  border-right: 1px solid ${p => (p.$on ? '#c9441a' : '#9b9b9b')};
  border-bottom: 1px solid ${p => (p.$on ? '#c9441a' : '#9b9b9b')};
  &:nth-child(2) { border-right-color: #000; }
  &:last-child { border-right: 0; }
`;
const RowHead = styled.div<{ $on?: boolean }>`
  background: ${p => (p.$on ? '#e95420' : '#fafafa')};
  color: ${p => (p.$on ? '#fff' : '#454545')};
  font: ${p => (p.$on ? 700 : 400)} 14px ${UI_FONT};
  display: grid;
  place-items: center;
  line-height: 19px;
  border-right: 1px solid #9b9b9b;
  border-bottom: 1px solid ${p => (p.$on ? '#c9441a' : '#9b9b9b')};
`;
const Cell = styled.div<{ $left?: boolean }>`
  border-right: 1px solid #c0c0c0;
  border-bottom: 1px solid #c0c0c0;
  font-size: 13.300px;
  letter-spacing: 0.330px;
  line-height: 20px;
  padding: ${p => (p.$left ? '0 0 0 1px' : '0 1px 0 0')};
  text-align: ${p => (p.$left ? 'left' : 'right')};
  white-space: nowrap;
  overflow: hidden;
  &:nth-child(2) { border-right-color: #000; padding-right: 2px; }
`;
const TopCell = styled.div<{ $span?: number; $first?: boolean }>`
  border-bottom: 1px solid #c0c0c0;
  grid-column: span ${p => p.$span || 1};
  ${p => p.$first && css`border-right: 1px solid #000;`}
`;
const Band = styled.div<{ $span: number; $pad?: number; $flush?: boolean }>`
  grid-column: span ${p => p.$span};
  background: #fac090;
  margin-left: ${p => (p.$flush ? 0 : -1)}px;
  display: flex;
  align-items: center;
  justify-content: ${p => (p.$pad ? 'flex-start' : 'center')};
  padding-left: ${p => p.$pad || 0}px;
  padding-right: 2px;
  font-size: 13.500px;
  line-height: 20px;
  overflow: hidden;
`;
const HeadCell = styled.div<{ $selected?: boolean; $single?: boolean }>`
  position: relative;
  border-right: 1px solid #c0c0c0;
  border-bottom: 1px solid #c0c0c0;
  display: flex;
  flex-direction: column;
  align-items: center;
  justify-content: center;
  font-size: 13px;
  font-weight: 700;
  line-height: 15px;
  padding: ${p => (p.$selected ? '2px 0 0' : p.$single ? '0 5px 2px 0' : '0 0 2px')};
  &:nth-child(2) { border-right-color: #000; }
  ${p => p.$selected && css`
    &::before {
      content: '';
      position: absolute;
      inset: -1px -2px -1px -1px;
      border: 2px solid #5f5f5f;
    }
    &::after {
      content: '';
      position: absolute;
      right: -3px;
      bottom: -1px;
      width: 4px;
      height: 3px;
      background: #5f5f5f;
    }
  `}
`;
const FreezeLine = styled.div`
  height: 1px;
  background: #000;
`;
const VScroll = styled.div`
  flex: 1;
  padding: 5px 3px 0;
  i { display: block; width: 6px; height: 253px; border-radius: 3px; background: #8a8a8a; }
`;
const HScroll = styled.div`
  height: 12px;
  flex: none;
  padding: 3px 0 0 4px;
  i { display: block; width: 724px; height: 6px; border-radius: 3px; background: #8a8a8a; }
`;
const TabBar = styled.div`
  height: 25px;
  flex: none;
  display: flex;
  align-items: stretch;
`;
const TabNav = styled.div`
  width: 142px;
  flex: none;
  padding: 0 0 2px 8px;
  display: flex;
  align-items: center;
  svg { margin-right: 8px; }
`;
const Tab = styled.div<{ $w: number; $pad: number; $bg?: string; $fg?: string; $on?: boolean }>`
  width: ${p => p.$w}px;
  flex: none;
  padding: 0 0 4px ${p => p.$pad}px;
  display: flex;
  align-items: center;
  background: ${p => p.$bg || 'transparent'};
  color: ${p => p.$fg || '#3d3d3d'};
  ${p => p.$on && css`box-shadow: inset 0 -3px 0 #919191; font-weight: 700;`}
  font-size: 13px;
`;

const COLUMN_NAMES = 'ABCDEFGHIJKLMNOPQRSTUVWX'.split('');

const DATA = `
01/10 206.75 259.00 252.50 201.33 214.00 239.00 131.3 1.57 1.97 1.92 1.53 1.63 1.82 Jan 1.73 0.91 1.14 1.11 0.89
02/10 224.00 264.00 255.75 212.00 226.00 241.00 128.9 1.74 2.05 1.98 1.64 1.75 1.87 Feb 1.81 0.96 1.13 1.10 0.91
03/10 203.00 269.00 259.00 209.50 250.00 239.00 123 1.65 2.19 2.11 1.70 2.03 1.94 Mar 1.90 0.87 1.15 1.11 0.90
04/10 227.38 269.23 259.43 214.46 244.29 241.17 124.2 1.83 2.17 2.09 1.73 1.97 1.94 Apr 1.90 0.96 1.14 1.10 0.91
05/10 251.76 263.04 270.00 227.27 257.58 243.42 131.6 1.91 2.00 2.05 1.73 1.96 1.85 May 1.87 1.02 1.07 1.10 0.92
06/10 238.59 256.84 275.00 220.59 250.00 241.94 138.8 1.72 1.85 1.98 1.59 1.80 1.74 Jun 1.84 0.93 1.00 1.08 0.86
07/10 240.00 258.17 285.72 214.29 250.00 241.94 137.2 1.75 1.88 2.08 1.56 1.82 1.76 Jul 1.88 0.93 1.00 1.11 0.83
08/10 240.00 292.63 289.16 213.31 251.00 234.74 137.4 1.75 2.13 2.10 1.55 1.83 1.71 Aug 1.86 0.94 1.14 1.13 0.83
09/10 275.72 287.12 288.50 210.43 216.21 232.46 134.5 2.05 2.13 2.14 1.56 1.61 1.73 Sep 1.89 1.08 1.13 1.13 0.83
10/10 195.85 259.00 228.17 169.14 145.66 198.41 132.2 1.48 1.96 1.73 1.28 1.10 1.50 Oct 1.65 0.90 1.19 1.05 0.78
11/10 162.34 214.29 200.00 153.00 164.01 200.00 132.4 1.23 1.62 1.51 1.16 1.24 1.51 Nov 1.56 0.78 1.04 0.97 0.74
12/10 178.39 224.00 244.50 139.00 139.00 199.37 139.2 1.28 1.61 1.76 1.00 1.00 1.43 Dec 1.64 0.78 0.98 1.07 0.61
01/11 194.43 223.88 237.00 174.00 159.38 196.06 139.3 1.40 1.61 1.70 1.25 1.14 1.41 Jan 1.73 0.81 0.93 0.99 0.72
02/11 228.72 218.94 231.48 172.62 183.19 196.08 133.8 1.71 1.64 1.73 1.29 1.37 1.47 Feb 1.81 0.95 0.91 0.96 0.71
03/11 263.00 214.00 234.00 171.23 207.00 202.00 131 2.01 1.63 1.79 1.31 1.58 1.54 Mar 1.90 1.06 0.86 0.94 0.69
04/11 263.00 221.00 235.00 179.00 207.50 206.00 132 1.99 1.67 1.78 1.36 1.57 1.56 Apr 1.90 1.05 0.88 0.94 0.71
05/11 259.50 222.50 222.50 175.00 208.00 220.50 133.6 1.94 1.67 1.67 1.31 1.56 1.65 May 1.87 1.04 0.89 0.89 0.70
06/11 256.00 224.00 217.25 177.00 205.00 218.00 140.8 1.82 1.59 1.54 1.26 1.46 1.55 Jun 1.84 0.99 0.86 0.84 0.68
07/11 256.41 226.00 239.00 184.00 205.00 210.00 138.8 1.85 1.63 1.72 1.33 1.48 1.51 Jul 1.88 0.98 0.86 0.91 0.70
08/11 256.21 242.50 245.17 182.50 205.00 206.00 141 1.82 1.72 1.74 1.29 1.45 1.46 Aug 1.86 0.97 0.92 0.93 0.69
09/11 256.00 259.00 251.33 181.00 205.00 202.00 138.1 1.85 1.88 1.82 1.31 1.48 1.46 Sep 1.89 0.98 0.99 0.96 0.69
10/11 256.00 258.00 236.00 187.25 205.00 199.00 137.1 1.87 1.88 1.72 1.37 1.50 1.45 Oct 1.65 1.13 1.14 1.05 0.83
11/11 250.00 257.00 240.38 189.66 235.16 217.50 139.4 1.79 1.84 1.72 1.36 1.69 1.56 Nov 1.56 1.15 1.18 1.10 0.87
12/11 258.18 292.00 275.00 235.38 249.67 260.02 139.3 1.85 2.10 1.97 1.69 1.79 1.87 Dec 1.64 1.13 1.28 1.21 1.03
01/12 - - 283.00 - 282.00 260.00 136.8 - - 2.07 - 2.06 1.90 Jan 1.73 - - 1.20 -
02/12 - - 283.00 - 247.48 258.00 132.4 - - 2.14 - 1.87 1.95 Feb 1.81 - - 1.18 -
03/12 - - 287.80 - 294.12 259.59 131.1 - - 2.20 - 2.24 1.98 Mar 1.90 - - 1.16 -
04/12 289.00 297.00 289.00 274.00 260.56 274.00 134.8 2.14 2.20 2.14 2.03 1.93 2.03 Apr 1.90 1.13 1.16 1.13 1.07
05/12 309.21 314.00 312.51 285.00 317.16 291.13 141.1 2.19 2.23 2.21 2.02 2.25 2.06 May 1.87 1.17 1.19 1.18 1.08
06/12 338.82 324.50 336.76 308.53 345.08 295.57 145 2.34 2.24 2.32 2.13 2.38 2.04 Jun 1.84 1.27 1.22 1.26 1.16
07/12 368.42 335.00 361.00 332.06 373.00 300.00 146.5 2.51 2.29 2.46 2.27 2.55 2.05 Jul 1.88 1.33 1.21 1.31 1.20
`.trim().split('\n').map(line => {
  const v = line.split(' ').map(x => (x === '-' ? '' : x));
  return [...v.slice(0, 7), '', v[7], '', ...v.slice(8, 14), '', v[14], v[15], '', ...v.slice(16), ''];
});

type Piece = [string, number];
const markets: Piece[][] = [
  [['Gotheye', 53], ['Millet', 37]],
  [['Mangaize', 59], ['Millet', 37]],
  [['Ouallam', 51], ['Millet', 37]],
  [['Tera Millet', 68]],
  [['Tillaberi', 51], ['Millet', 37]],
  [['Niamey', 48], ['Millet', 37]],
];
const cpi: Piece[] = [['Consumer', 62], ['Food Price', 64], ['Index', 35], ['(2000 =', 47], ['100)', 29]];
const headings: Piece[][] = [[], ...markets, [], cpi, [], ...markets, [], [], [], [], ...markets.slice(0, 4), []];

/* ---------- status bar ---------- */

const Status = styled.footer`
  height: 21px;
  flex: none;
  border-top: 1px solid #bdbdbd;
  display: flex;
  align-items: center;
  color: #454545;
`;
const Field = styled.div<{ $w: number; $pad?: number }>`
  width: ${p => p.$w}px;
  height: 14px;
  flex: none;
  padding-left: ${p => p.$pad || 0}px;
  display: flex;
  align-items: center;
  line-height: 14px;
  border-right: 1px solid #dcdcdc;
  &:last-child { border-right: 0; }
`;

/* ---------- sidebar ---------- */

const Sidebar = styled.aside`
  flex: 1;
  border-left: 1px solid #b5b5b5;
  display: flex;
  position: relative;
`;
const Grip = styled.div`
  position: absolute;
  left: 0;
  top: 409px;
  width: 6px;
  height: 73px;
  background: #999;
  display: grid;
  place-items: center;
`;
const SideIcons = styled.div`
  width: 59px;
  padding: 3px 0 0 1px;
  display: flex;
  flex-direction: column;
  align-items: center;
`;
const SideButton = styled.div<{ $on?: boolean; $mb?: number }>`
  width: 36px;
  height: 34px;
  margin-bottom: ${p => p.$mb ?? 8}px;
  display: grid;
  place-items: center;
  border-radius: 6px;
  ${p => p.$on && css`background: #d6d6d6; box-shadow: inset 0 0 0 1px #c3c3c3;`}
`;

const Cursor = styled.div`
  position: absolute;
  left: 1071px;
  top: 791px;
`;

const menus: Piece[] = [
  ['File', 24], ['Edit', 27], ['View', 33], ['Insert', 39], ['Format', 49], ['Styles', 39.500],
  ['Sheet', 38], ['Data', 31], ['Tools', 35.500], ['Window', 54], ['Help', 31],
];

export default function App() {
  return (
    <Screen>
      <GlobalStyle />
      <TopBar>
        <TopLeft>
          <Label w={63}>Activities</Label>
          <AppName>
            <svg width="12" height="16" viewBox="0 0 12 16">
              <path d="M1 1h7l3.500 3.500V15H1z" fill="#f2f2f2" />
              <path d="M3 6h6.500v6H3zM3 8h6.500M3 10h6.500M5.200 6v6M7.400 6v6" fill="none" stroke="#222" strokeWidth=".9" />
            </svg>
            <Label w={108}>LibreOffice Calc</Label>
          </AppName>
        </TopLeft>
        <Clock>
          <Label w={87}>Apr 21 22:54</Label>
          <svg width="15" height="16" viewBox="0 0 15 16" fill="none" stroke="#eee" strokeWidth="1.200">
            <path d="M2 12.500c2-1.500 1.500-4 1.800-6C4.200 4 5.500 3 7.500 3s3.300 1 3.700 3.500c.3 2-.2 4.500 1.800 6zM6 14.500h3M7.500 1.500V3" />
          </svg>
        </Clock>
        <TopRight>
          <svg width="16" height="15" viewBox="0 0 16 15">
            <path d="M1 5h3l4-4v13l-4-4H1z" fill="#eee" />
            <path d="M10 5q1.500 2.500 0 5M12 3q3 4.500 0 9" fill="none" stroke="#ddd" strokeWidth="1.300" />
          </svg>
          <svg width="15" height="15" viewBox="0 0 15 15" fill="none" stroke="#eee" strokeWidth="1.400">
            <path d="M4 2.500a6 6 0 1 0 7 0M7.500.5v7" />
          </svg>
        </TopRight>
      </TopBar>
      <Body>
        <Dock>
          {['chrome', 'thunderbird', 'vscode', 'vlc', 'writer', 'calc', 'impress', 'gimp', 'files', 'terminal', 'software', 'help'].map(k => (
            <DockSlot key={k} $active={k === 'calc'}>
              {['writer', 'calc', 'files'].includes(k) && <RunDot />}
              {dockIcons[k]}
            </DockSlot>
          ))}
          <DockRule />
          <DockSlot>{dockIcons.trash}</DockSlot>
          <DockSpacer />
          <AppGrid>{Array.from({ length: 9 }, (_, i) => <i key={i} />)}</AppGrid>
        </Dock>
        <Win>
          <TitleBar>
            <span />
            <Label w={391} bold>workbook-with-sample-database.xlsx - LibreOffice Calc</Label>
            <WinButtons>
              <WinButton><svg width="10" height="10" viewBox="0 0 10 10"><path d="M1 7.500h8" stroke="#333" /></svg></WinButton>
              <WinButton>
                <svg width="10" height="10" viewBox="0 0 10 10" fill="none" stroke="#333">
                  <path d="M1.500 3.500h5v5h-5z" strokeWidth="1.200" /><path d="M4 1.500h4.500V6" stroke="#888" />
                </svg>
              </WinButton>
              <WinButton><svg width="10" height="10" viewBox="0 0 10 10"><path d="M1.500 1.500l7 7M8.500 1.500l-7 7" stroke="#333" strokeWidth="1.400" /></svg></WinButton>
            </WinButtons>
          </TitleBar>
          <MenuBar>
            {menus.map(([t, w]) => <Label key={t} w={w}>{t}</Label>)}
          </MenuBar>
          <ToolRow $h={41} $pad="2px 0 0 4px"><Tools items={standardBar} /></ToolRow>
          <ToolRow $h={37} $pad="0 0 0 4px">
            <Combo $w={221} $arrow={36} $mr={8}><Label w={43} size={14}>Calibri</Label><Chevron w={36} dx={1} /></Combo>
            <Combo $w={101} $arrow={36} $mr={0}><Label w={33}>11 pt</Label><Chevron w={36} dx={1} /></Combo>
            <Sep />
            <Tools items={formatBar} />
          </ToolRow>
          <Content>
            <Main>
              <FormulaBar>
                <Combo $w={172} $arrow={35} $mr={5}><Label w={12}>I2</Label><Chevron w={35} dx={1} /></Combo>
                <FormulaTools>
                  <svg width="76" height="22" viewBox="0 0 76 22" fill="none" stroke="#222">
                    <path d="M7 4.500q-3-1-3 2v9M1 8.500h6" strokeWidth="1.900" />
                    <path d="M8.500 12.500l4 4M12.500 12.500l-4 4" strokeWidth="1.200" />
                    <path d="M32.500 6.500V5h-9l5 6-5 5.500h9V15" strokeWidth="1.800" />
                    <path d="M44.500 10h7l-3.500 4z" fill="#111" stroke="none" />
                    <path d="M61 8.500h13M61 13.500h13" strokeWidth="1.900" />
                  </svg>
                </FormulaTools>
                <FormulaInput><Label w={269}>Consumer Food Price Index (2000 = 100)</Label></FormulaInput>
                <Chevron w={20} h={20} />
              </FormulaBar>
              <InfoBar>
                <InfoIcon />
                <InfoText><Label w={251}>Help us make LibreOffice even better!</Label></InfoText>
                <InfoButton $w={117}><Label w={83}>Get involved</Label></InfoButton>
                <CloseX />
              </InfoBar>
              <InfoBar>
                <InfoIcon />
                <InfoText><Label w={341}>Your donations support our worldwide community.</Label></InfoText>
                <InfoButton $w={83}><Label w={49}>Donate</Label></InfoButton>
                <CloseX />
              </InfoBar>
              <SheetArea>
                <Sheet>
                  <SheetRow $h={20}>
                    <ColHead />
                    {COLUMN_NAMES.map(c => <ColHead key={c} $on={c === 'I'}>{c}</ColHead>)}
                    <ColHead />
                  </SheetRow>
                  <SheetRow $h={20}>
                    <RowHead>1</RowHead>
                    <TopCell $first />
                    <Band $span={6} $flush><Label w={88}>Raw price data</Label></Band>
                    <TopCell />
                    <Band $span={1}><Label w={19}>CPI</Label></Band>
                    <TopCell />
                    <Band $span={6}><Label w={138}>Detrended for inflation</Label></Band>
                    <TopCell />
                    <Band $span={2}><Label w={89}>Seasonal index</Label></Band>
                    <TopCell />
                    <Band $span={5} $pad={139}><Label w={187}>Detrended and deseasonalized</Label></Band>
                  </SheetRow>
                  <SheetRow $h={81}>
                    <RowHead $on>2</RowHead>
                    {headings.map((pieces, i) => (
                      <HeadCell key={i} $selected={i === 8} $single={pieces.length === 1}>
                        {pieces.map(([t, w]) => <Label key={t} w={w}>{t}</Label>)}
                      </HeadCell>
                    ))}
                  </SheetRow>
                  <FreezeLine />
                  {DATA.map((row, r) => (
                    <SheetRow key={r} $h={20}>
                      <RowHead>{String(r + 3)}</RowHead>
                      {row.map((v, c) => <Cell key={c} $left={c === 17}>{v}</Cell>)}
                    </SheetRow>
                  ))}
                </Sheet>
                <VScroll><i /></VScroll>
              </SheetArea>
              <HScroll><i /></HScroll>
              <TabBar>
                <TabNav>
                  <svg width="18" height="16" viewBox="0 0 18 16"><path d="M2 1v14M4 8h13M9 4L4.500 8 9 12" fill="none" stroke="#f2a088" strokeWidth="1.900" /></svg>
                  <svg width="17" height="16" viewBox="0 0 18 16"><path d="M1 3h1.500v10H1zM9.500 3v10L3 8zM17 3v10l-7-5z" fill="#a3a3a3" /></svg>
                  <svg width="17" height="16" viewBox="0 0 18 16"><path d="M1 3v10l7-5zM8.500 3v10L15 8zM15.500 3H17v10h-1.500z" fill="#a3a3a3" /></svg>
                  <svg width="18" height="16" viewBox="0 0 18 16"><path d="M16 1v14M1 8h13M9 4l4.500 4L9 12" fill="none" stroke="#f2a088" strokeWidth="1.900" /></svg>
                  <svg width="24" height="20" viewBox="0 0 24 20">
                    <path d="M6.500 2.500h7l5 4.500v11.500h-12q-1 0-1-1v-14q0-1 1-1z" fill="#fff" stroke="#555" />
                    <circle cx="17" cy="15.500" r="3.800" fill="#178a2b" /><path d="M15 15.500h4M17 13.500v4" stroke="#fff" strokeWidth="1.300" />
                  </svg>
                </TabNav>
                <Tab $w={71} $pad={14}><Label w={45}>ReadMe</Label></Tab>
                <Tab $w={81} $pad={14}><Label w={53}>Raw_data</Label></Tab>
                <Tab $w={58} $pad={13} $bg="#403152" $fg="#fff"><Label w={33}>Beans</Label></Tab>
                <Tab $w={60} $pad={14} $bg="#403152" $fg="#fff"><Label w={31}>Millet</Label></Tab>
                <Tab $w={98} $pad={14} $bg="#e46c0a" $fg="#1a0d00"><Label w={68}>Mkt Ouallam</Label></Tab>
                <Tab $w={73} $pad={11} $bg="#403152" $fg="#fff"><Label w={50}>Sorghum</Label></Tab>
                <Tab $w={167} $pad={12} $bg="#fff" $on><Label w={142}>Millet spatial integration</Label></Tab>
                <Tab $w={97} $pad={12} $bg="#e46c0a" $fg="#1a0d00"><Label w={71}>Mkt Gotheye</Label></Tab>
                <Tab $w={103} $pad={14} $bg="#e46c0a" $fg="#1a0d00"><Label w={75}>Mkt Mangaize</Label></Tab>
                <Tab $w={77} $pad={14} $bg="#e46c0a" $fg="#1a0d00"><Label w={48}>Mkt Tera</Label></Tab>
              </TabBar>
            </Main>
            <Sidebar>
              <Grip><svg width="6" height="10" viewBox="0 0 6 10"><path d="M0 0v10l5.500-5z" fill="#f4f4f4" /></svg></Grip>
              <SideIcons>
                <SideButton $mb={10}>
                  <svg width="12" height="12" viewBox="0 0 12 12"><path d="M1 1.500h10M1 5.500h10M1 9.500h10" stroke="#333" strokeWidth="1.200" /></svg>
                </SideButton>
                <SideButton $on>
                  <svg width="18" height="18" viewBox="0 0 18 18">
                    <rect x="1" y="1" width="16" height="7" rx="3.500" fill="#e95420" /><rect x="1" y="10" width="16" height="7" rx="3.500" fill="#e95420" />
                    <circle cx="13.500" cy="4.500" r="2.600" fill="#fff" /><circle cx="4.500" cy="13.500" r="2.600" fill="#fff" />
                  </svg>
                </SideButton>
                <SideButton>
                  <svg width="24" height="24" viewBox="0 0 24 24" fill="none">
                    <path d="M13.500 12l3.500-9h1.500l3.500 9M15 9h5.500" stroke="#333" strokeWidth="2.200" />
                    <path d="M4.500 16q-1-5 2.500-7.500l3-1 1 2" stroke="#555" strokeWidth="1.200" />
                    <path d="M7 11l4-3.500 6.500 6-4.500 4.500z" fill="#fff" stroke="#555" strokeWidth="1.200" />
                    <path d="M6 17l-4 5" stroke="#fa8f7e" strokeWidth="3" />
                  </svg>
                </SideButton>
                <SideButton>
                  <svg width="22" height="20" viewBox="0 0 22 20">
                    <rect x="1.500" y="1.500" width="15" height="13" rx="1.500" fill="#d95fd0" stroke="#4a3a48" />
                    <rect x="4.500" y="5.500" width="16" height="13" rx="1.500" fill="#d95fd0" stroke="#4a3a48" />
                    <path d="M8 16l3-5 2 2.500 1-1.500 3 4z" fill="#fff" /><circle cx="16.500" cy="9.500" r="1.200" fill="#fff" />
                  </svg>
                </SideButton>
                <SideButton>
                  <svg width="22" height="22" viewBox="0 0 22 22">
                    <circle cx="11" cy="11" r="9.500" fill="#4d7be8" stroke="#3a4560" strokeWidth="1.200" />
                    <path d="M15.500 6l-3 7-5.500 3 2.500-6z" fill="#e8eefc" /><path d="M16 5.500l-3 6-2-2z" fill="#e0344c" />
                  </svg>
                </SideButton>
                <SideButton>
                  <svg width="20" height="20" viewBox="0 0 20 20" fill="none" stroke="#2b2b2b">
                    <path d="M9.500 2.500Q6 1.500 6 5v13M2.500 8H9" strokeWidth="2" /><path d="M11.500 12l6 6M17.500 12l-6 6" strokeWidth="2" />
                  </svg>
                </SideButton>
              </SideIcons>
            </Sidebar>
          </Content>
          <Status>
            <Field $w={259} $pad={10}><Label w={73}>Sheet 7 of 10</Label></Field>
            <Field $w={241} />
            <Field $w={377} $pad={8}><Label w={194}>PageStyle_Millet spatial integration</Label></Field>
            <Field $w={282} $pad={87}><Label w={110}>English (Hong Kong)</Label></Field>
            <Field $w={68} />
            <Field $w={29} $pad={6}>
              <svg width="20" height="12" viewBox="0 0 20 12" fill="none">
                <path d="M1 2.500h8v7H1z" stroke="#e95420" strokeWidth="1.300" /><path d="M13 1.500h5M13 10.500h5M15.500 1.500v9" stroke="#333" />
              </svg>
            </Field>
            <Field $w={29} $pad={9}>
              <svg width="12" height="12" viewBox="0 0 12 12">
                <path d="M4 0h4v5h3L6 10 1 5h3z" fill="#8cc63a" stroke="#4a5a3a" strokeWidth="1" /><path d="M2 11h8" stroke="#444" />
              </svg>
            </Field>
            <Field $w={29} />
            <Field $w={345} $pad={126}><Label w={94}>Average: ; Sum: 0</Label></Field>
            <Field $w={143} $pad={9}>
              <svg width="130" height="14" viewBox="0 0 130 14" fill="none">
                <path d="M1 7h8M117 7h9M121.500 2.500v9" stroke="#555" strokeWidth="1.800" />
                <path d="M14 7h97" stroke="#9a9a9a" strokeWidth="1.400" />
                <circle cx="62" cy="7" r="3.700" fill="#fff" stroke="#666" strokeWidth="1.200" />
              </svg>
            </Field>
            <Field $w={48} $pad={7}><Label w={31}>100%</Label></Field>
          </Status>
        </Win>
      </Body>
      <Cursor>
        <svg width="18" height="28" viewBox="0 0 18 28">
          <path d="M2 2v19l4.500-4 3.500 8 3.500-1.500-3.500-7.500h6z" fill="#1a1a1a" stroke="#fff" strokeWidth="1.300" />
        </svg>
      </Cursor>
    </Screen>
  );
}
